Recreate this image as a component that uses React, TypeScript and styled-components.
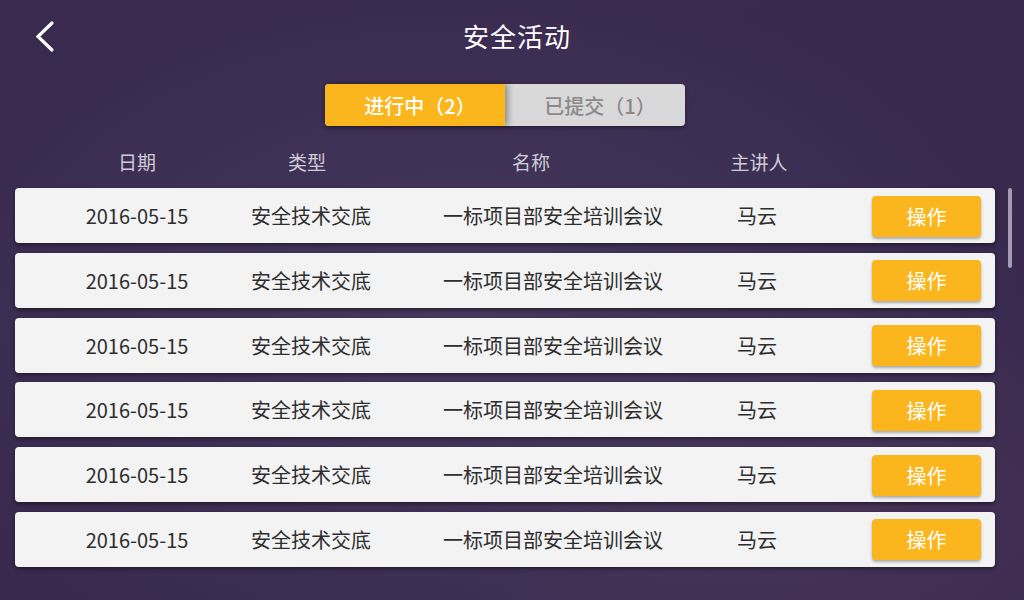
import React from "react";
import styled, { createGlobalStyle } from "styled-components";

const Global = createGlobalStyle`
  html, body { margin: 0; padding: 0; }
  body { font-family: "Noto Sans CJK SC", "Noto Sans", sans-serif; }
  * { box-sizing: border-box; }
`;

const Page = styled.div`
  position: relative;
  width: 1024px;
  height: 600px;
  overflow: hidden;
  background:
    radial-gradient(ellipse 55% 60% at 45% 55%, rgba(80, 72, 108, 0.55) 0%, rgba(80, 72, 108, 0) 100%),
    radial-gradient(ellipse 40% 40% at 80% 85%, rgba(90, 70, 100, 0.35) 0%, rgba(90, 70, 100, 0) 100%),
    linear-gradient(160deg, #3a2a4f 0%, #39294e 50%, #3a2a4f 100%);
  display: flex;
  flex-direction: column;
`;

const TopBar = styled.header`
  position: relative;
  height: 72px;
  display: flex;
  align-items: center;
  justify-content: center;
`;

const BackButton = styled.button`
  position: absolute;
  left: 28px;
  top: 14px;
  width: 34px;
  height: 44px;
  border: none;
  padding: 0;
  background: transparent;
  cursor: pointer;
`;

const Title = styled.h1`
  margin: 0;
  padding-left: 10px;
  color: #ffffff;
  font-size: 26px;
  font-weight: 400;
  letter-spacing: 1px;
  line-height: 1;
`;

const Tabs = styled.div`
  margin: 12px 0 0 325px;
  width: 360px;
  height: 42px;
  display: flex;
  border-radius: 4px;
  background: #d9d9d9;
  box-shadow: 0 2px 4px rgba(0, 0, 0, 0.35);
`;

const Tab = styled.div<{ $active?: boolean }>`
  flex: 1;
  display: flex;
  align-items: center;
  justify-content: center;
  padding-left: 10px;
  font-size: 20px;
  font-weight: 500;
  color: ${(p) => (p.$active ? "#ffffff" : "#8a8a8a")};
  background: ${(p) => (p.$active ? "#fbb61e" : "transparent")};
  border-radius: ${(p) => (p.$active ? "4px 0 0 4px" : "0 4px 4px 0")};
  box-shadow: ${(p) => (p.$active ? "3px 0 6px rgba(0,0,0,0.35)" : "none")};
  z-index: ${(p) => (p.$active ? 1 : 0)};
`;

const HeaderRow = styled.div`
  display: grid;
  grid-template-columns: 164px 176px 272px 184px;
  padding: 23px 0 13px 55px;
  color: #cfcbd6;
  font-size: 19px;
  line-height: 26px;
  justify-items: center;
`;

const List = styled.div`
  display: flex;
  flex-direction: column;
  gap: 9.8px;
  padding: 0 29px 0 15px;
`;

const Row = styled.div`
  height: 55px;
  display: grid;
  grid-template-columns: 164px 184px 300px 108px 1fr;
  align-items: center;
  justify-items: center;
  padding: 0 14px 0 40px;
  background: #f3f3f3;
  border-radius: 4px;
  box-shadow: 0 2px 4px rgba(0, 0, 0, 0.45);
  color: #2e2e2e;
  font-size: 20px;
`;

const Cell = styled.span`
  white-space: nowrap;
`;

const ActionButton = styled.button`
  justify-self: end;
  width: 109px;
  height: 41px;
  margin-top: 1px;
  border: none;
  border-radius: 4px;
  background: #fbb61e;
  color: #ffffff;
  font-family: inherit;
  font-size: 20px;
  box-shadow: 0 2px 3px rgba(0, 0, 0, 0.3);
  cursor: pointer;
`;

const ScrollThumb = styled.div`
  position: absolute;
  left: 1008px;
  top: 188px;
  width: 4px;
  height: 80px;
  border-radius: 2px;
  background: rgba(210, 205, 220, 0.7);
`;

const rows = Array.from({ length: 6 }, () => ({
  date: "2016-05-15",
  type: "安全技术交底",
  name: "一标项目部安全培训会议",
  speaker: "马云",
}));

export default function App() {
  return (
    <>
      <Global />
      <Page>
        <TopBar>
          <BackButton aria-label="返回">
            <svg width="34" height="44" viewBox="0 0 34 44">
              <polyline
                points="24,9 10,22.5 24,36"
                fill="none"
                stroke="#ffffff"
                strokeWidth="3.2"
                strokeLinecap="round"
                strokeLinejoin="miter"
              />
            </svg>
          </BackButton>
          <Title>安全活动</Title>
        </TopBar>
        <Tabs>
          <Tab $active>进行中（2）</Tab>
          <Tab>已提交（1）</Tab>
        </Tabs>
        <HeaderRow>
          <span>日期</span>
          <span>类型</span>
          <span>名称</span>
          <span>主讲人</span>
        </HeaderRow>
        <List>
          {rows.map((r, i) => (
            <Row key={i}>
              <Cell>{r.date}</Cell>
              <Cell>{r.type}</Cell>
              <Cell>{r.name}</Cell>
              <Cell>{r.speaker}</Cell>
              <ActionButton>操作</ActionButton>
            </Row>
          ))}
        </List>
        <ScrollThumb />
      </Page>
    </>
  );
}
